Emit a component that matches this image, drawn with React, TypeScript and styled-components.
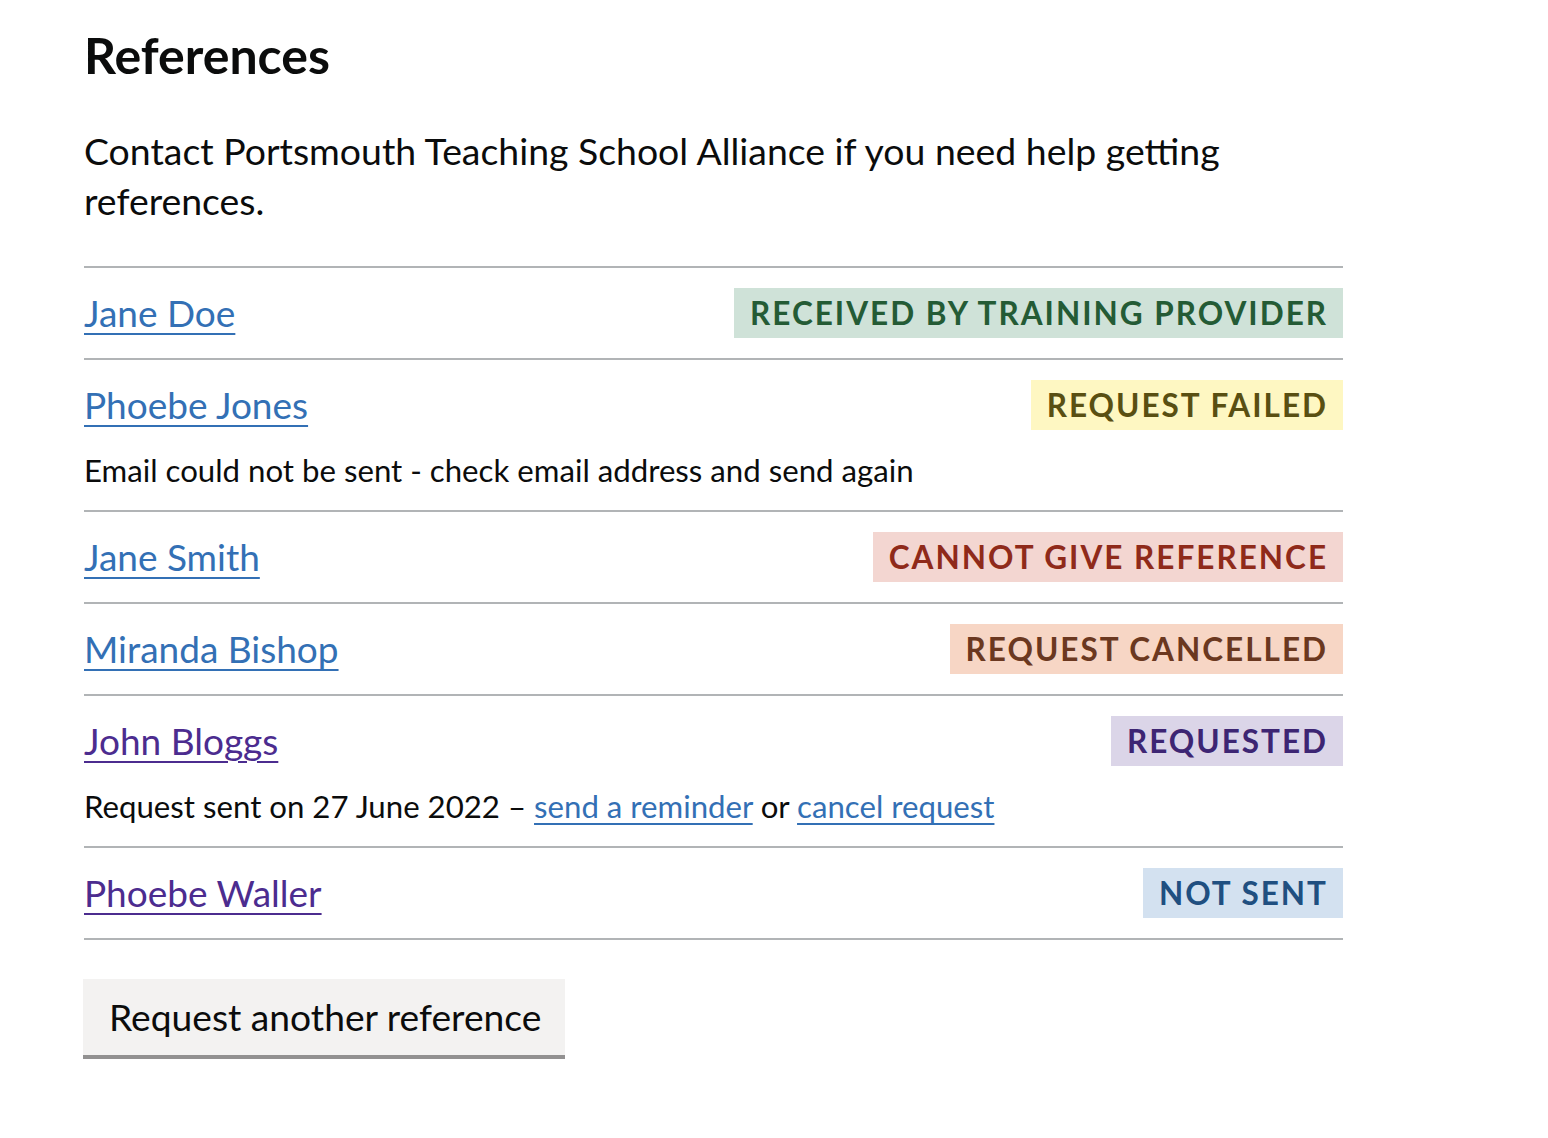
import React from "react";
import styled, { createGlobalStyle } from "styled-components";

const GlobalStyle = createGlobalStyle`
  html, body { margin: 0; padding: 0; background: #ffffff; }
  body {
    font-family: "Lato", "Liberation Sans", sans-serif;
    color: #0b0c0c;
  }
`;

const Page = styled.main`
  padding: 25px 0 60px 84px;
  width: 1259px;
`;

const Heading = styled.h2`
  margin: 0;
  font-size: 50px;
  line-height: 60px;
  font-weight: 700;
  color: #0b0c0c;
`;

const Lead = styled.p`
  margin: 41px 0 40px;
  font-size: 37.4px;
  line-height: 50px;
  max-width: 1259px;
`;

const List = styled.ul`
  list-style: none;
  margin: 0;
  padding: 0;
  border-top: 2px solid #b1b4b6;
`;

const Row = styled.li`
  padding: 20px 0;
  border-bottom: 2px solid #b1b4b6;
`;

const RowMain = styled.div`
  display: flex;
  align-items: center;
  justify-content: space-between;
  height: 50px;
`;

const NameLink = styled.a<{ $visited?: boolean }>`
  font-size: 37px;
  line-height: 50px;
  color: ${(p) => (p.$visited ? "#4c2c8f" : "#3370b5")};
  text-decoration: underline;
  text-decoration-thickness: 2px;
  text-underline-offset: 6px;
  cursor: pointer;
`;

type TagTone = "green" | "yellow" | "red" | "orange" | "purple" | "blue";

const tagColours: Record<TagTone, { fg: string; bg: string }> = {
  green: { fg: "#245b35", bg: "#cfe2d8" },
  yellow: { fg: "#594f12", bg: "#fef7c2" },
  red: { fg: "#8f2a1a", bg: "#f3d6d1" },
  orange: { fg: "#6b3820", bg: "#f7d6c5" },
  purple: { fg: "#3d2573", bg: "#dbd5e8" },
  blue: { fg: "#204f80", bg: "#d3e1f0" },
};

const Tag = styled.strong<{ $tone: TagTone }>`
  display: inline-block;
  height: 50px;
  line-height: 50px;
  padding: 0 15px 0 16px;
  font-size: 31.5px;
  font-weight: 700;
  letter-spacing: 2px;
  text-transform: uppercase;
  white-space: nowrap;
  color: ${(p) => tagColours[p.$tone].fg};
  background: ${(p) => tagColours[p.$tone].bg};
`;

const Hint = styled.p`
  margin: 20px 0 0;
  font-size: 31.2px;
  line-height: 40px;
`;

const InlineLink = styled.a`
  color: #3370b5;
  text-decoration: underline;
  text-decoration-thickness: 2px;
  text-underline-offset: 5px;
  cursor: pointer;
`;

const SecondaryButton = styled.button`
  margin-top: 39px;
  margin-left: -1px;
  height: 76px;
  padding: 0 24px 0 26px;
  border: 0;
  border-radius: 0;
  background: #f3f2f1;
  box-shadow: 0 4px 0 #929191;
  font-family: "Lato", "Liberation Sans", sans-serif;
  font-size: 37.2px;
  line-height: 76px;
  color: #0b0c0c;
  cursor: pointer;
`;

type Ref = {
  name: string;
  tone: TagTone;
  status: string;
  visited?: boolean;
  hint?: React.ReactNode;
};

const refs: Ref[] = [
  { name: "Jane Doe", tone: "green", status: "Received by training provider" },
  {
    name: "Phoebe Jones",
    tone: "yellow",
    status: "Request failed",
    hint: "Email could not be sent - check email address and send again",
  },
  { name: "Jane Smith", tone: "red", status: "Cannot give reference" },
  { name: "Miranda Bishop", tone: "orange", status: "Request cancelled" },
  {
    name: "John Bloggs",
    tone: "purple",
    status: "Requested",
    visited: true,
    hint: (
      <>
        Request sent on 27 June 2022 – <InlineLink>send a reminder</InlineLink> or{" "}
        <InlineLink>cancel request</InlineLink>
      </>
    ),
  },
  { name: "Phoebe Waller", tone: "blue", status: "Not sent", visited: true },
];

export default function App() {
  return (
    <Page>
      <GlobalStyle />
      <Heading>References</Heading>
      <Lead>
        Contact Portsmouth Teaching School Alliance if you need help getting references.
      </Lead>
      <List>
        {refs.map((r) => (
          <Row key={r.name}>
            <RowMain>
              <NameLink $visited={r.visited}>{r.name}</NameLink>
              <Tag $tone={r.tone}>{r.status}</Tag>
            </RowMain>
            {r.hint && <Hint>{r.hint}</Hint>}
          </Row>
        ))}
      </List>
      <SecondaryButton>Request another reference</SecondaryButton>
    </Page>
  );
}
